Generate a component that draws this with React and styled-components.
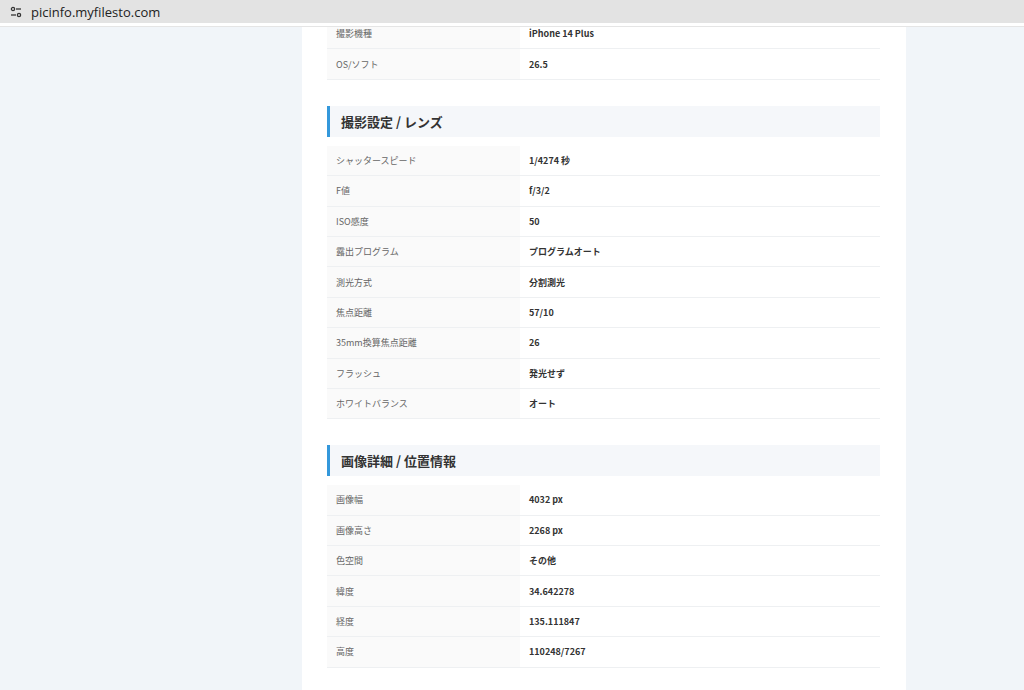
import React from "react";
import styled, { createGlobalStyle } from "styled-components";

const Global = createGlobalStyle`
  html, body { margin: 0; padding: 0; height: 690px; overflow: hidden; }
  body { font-family: "Noto Sans CJK JP", "Noto Sans", sans-serif; background: #f1f5f9; }
`;

const Page = styled.div`
  height: 690px;
  display: flex;
  flex-direction: column;
  overflow: hidden;
`;

const Bar = styled.div`
  height: 27px;
  flex: none;
  background: #fff;
  border-bottom: 1px solid #e5e5e5;
  box-sizing: border-box;
`;

const Address = styled.div`
  height: 23px;
  background: #e3e3e3;
  display: flex;
  align-items: center;
  gap: 8px;
  padding-left: 9px;
  font-family: "Open Sans", "Liberation Sans", sans-serif;
  font-size: 13px;
  color: #222;
`;

const Main = styled.div`
  flex: 1;
  display: flex;
  padding-left: 302px;
  overflow: hidden;
`;

const Card = styled.div`
  width: 604px;
  flex: none;
  background: #fff;
  padding: 0 26px 0 25px;
  box-sizing: border-box;
  margin-top: -8px;
`;

const Table = styled.div`
  border-top: ${p => (p.$top ? "1px solid #eef0f2" : "none")};
  margin-bottom: 26px;
`;

const Row = styled.div`
  display: grid;
  grid-template-columns: 193px 1fr;
  height: 30.4px;
  border-bottom: 1px solid #eef0f2;
  box-sizing: border-box;
  font-size: 9px;
`;

const Label = styled.div`
  background: #fafafa;
  color: #666;
  display: flex;
  align-items: center;
  padding-left: 9px;
`;

const Value = styled.div`
  color: #333;
  font-weight: 700;
  display: flex;
  align-items: center;
  padding-left: 9px;
`;

const Heading = styled.div`
  height: 31px;
  background: #f5f7fa;
  border-left: 3px solid #3498db;
  display: flex;
  align-items: center;
  padding-left: 11px;
  font-size: 13px;
  font-weight: 700;
  color: #333;
  margin-bottom: 9px;
`;

const Section = ({ title, rows }) => (
  <>
    {title && <Heading>{title}</Heading>}
    <Table>
      {rows.map(([k, v]) => (
        <Row key={k}>
          <Label>{k}</Label>
          <Value>{v}</Value>
        </Row>
      ))}
    </Table>
  </>
);

export default function App() {
  return (
    <Page>
      <Global />
      <Bar>
        <Address>
          <svg width="14" height="14" viewBox="0 0 14 14" fill="none" stroke="#333" strokeWidth="1.3">
            <circle cx="4" cy="4" r="1.6" />
            <line x1="7" y1="4" x2="12" y2="4" />
            <circle cx="10" cy="10" r="1.6" />
            <line x1="2" y1="10" x2="7" y2="10" />
          </svg>
          picinfo.myfilesto.com
        </Address>
      </Bar>
      <Main>
        <Card>
          <Section rows={[["撮影機種", "iPhone 14 Plus"], ["OS/ソフト", "26.5"]]} />
          <Section
            title="撮影設定 / レンズ"
            rows={[
              ["シャッタースピード", "1/4274 秒"],
              ["F値", "f/3/2"],
              ["ISO感度", "50"],
              ["露出プログラム", "プログラムオート"],
              ["測光方式", "分割測光"],
              ["焦点距離", "57/10"],
              ["35mm換算焦点距離", "26"],
              ["フラッシュ", "発光せず"],
              ["ホワイトバランス", "オート"],
            ]}
          />
          <Section
            title="画像詳細 / 位置情報"
            rows={[
              ["画像幅", "4032 px"],
              ["画像高さ", "2268 px"],
              ["色空間", "その他"],
              ["緯度", "34.642278"],
              ["経度", "135.111847"],
              ["高度", "110248/7267"],
            ]}
          />
          <Table $top />
        </Card>
      </Main>
    </Page>
  );
}
